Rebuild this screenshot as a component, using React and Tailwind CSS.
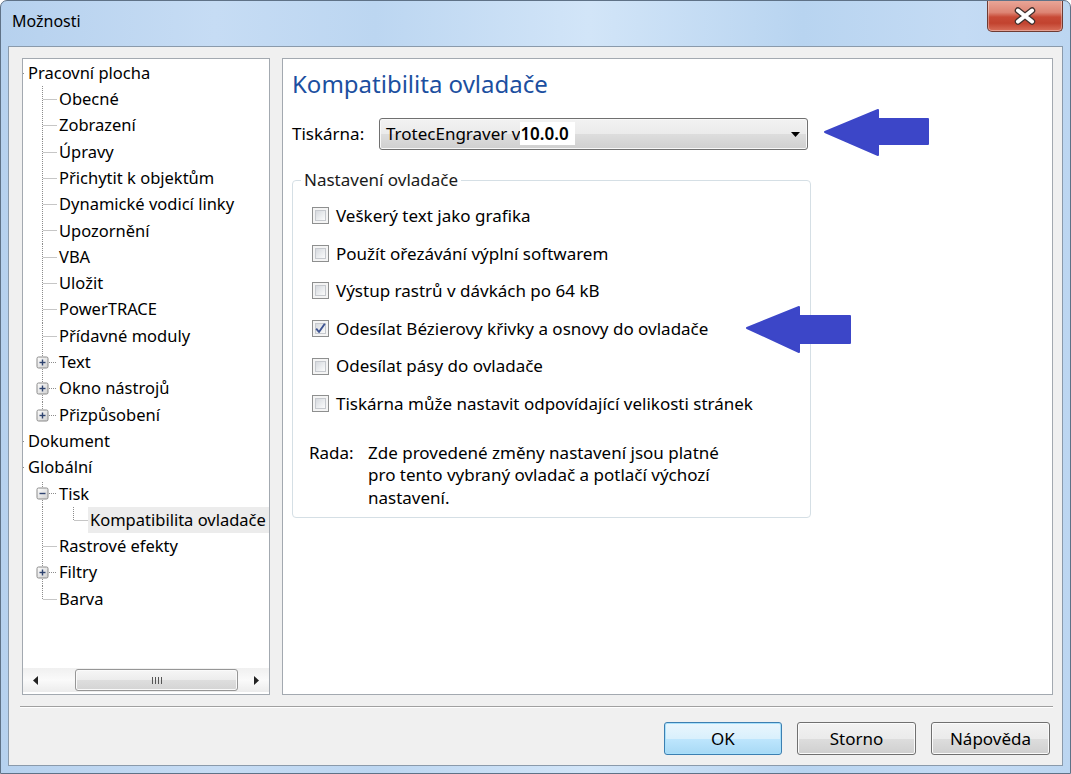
import React from "react";

const LINE = "#8c8c8c";

function Cell({ type }) {
  const c = 16.5;
  const m = 13.5;
  const dash = "1 1";
  const parts = [];
  if (type === "v" || type === "t" || type === "p" || type === "m") {
    if (type === "p" || type === "m") {
      parts.push(<line key="a" x1={c} y1={0} x2={c} y2={8} stroke={LINE} strokeDasharray={dash} />);
      parts.push(<line key="b" x1={c} y1={20} x2={c} y2={27} stroke={LINE} strokeDasharray={dash} />);
    } else {
      parts.push(<line key="a" x1={c} y1={0} x2={c} y2={27} stroke={LINE} strokeDasharray={dash} />);
    }
  }
  if (type === "l" || type === "pl") {
    parts.push(<line key="a" x1={c} y1={0} x2={c} y2={type === "pl" ? 8 : m} stroke={LINE} strokeDasharray={dash} />);
  }
  if (type === "t" || type === "l") {
    parts.push(<line key="h" x1={c + 1} y1={m} x2={31} y2={m} stroke={LINE} strokeDasharray={dash} />);
  }
  if (type === "p" || type === "pl" || type === "m") {
    parts.push(<line key="h" x1={23} y1={m} x2={31} y2={m} stroke={LINE} strokeDasharray={dash} />);
    parts.push(
      <rect key="r" x={11} y={8} width={11} height={11} rx={1.5} fill="url(#pbox)" stroke="#8a8a8a" />
    );
    parts.push(<line key="mh" x1={13.5} y1={m} x2={19.5} y2={m} stroke="#2f4470" strokeWidth={1.4} />);
    if (type !== "m") {
      parts.push(<line key="mv" x1={c} y1={10.5} x2={c} y2={16.5} stroke="#2f4470" strokeWidth={1.4} />);
    }
  }
  return (
    <svg width="31" height="27" className="shrink-0 block">
      <defs>
        <linearGradient id="pbox" x1="0" y1="0" x2="1" y2="1">
          <stop offset="0" stopColor="#ffffff" />
          <stop offset="1" stopColor="#cfcfcf" />
        </linearGradient>
      </defs>
      {parts}
    </svg>
  );
}

const TREE = [
  { t: "Pracovní plocha", root: true },
  { t: "Obecné", c: ["t"] },
  { t: "Zobrazení", c: ["t"] },
  { t: "Úpravy", c: ["t"] },
  { t: "Přichytit k objektům", c: ["t"] },
  { t: "Dynamické vodicí linky", c: ["t"] },
  { t: "Upozornění", c: ["t"] },
  { t: "VBA", c: ["t"] },
  { t: "Uložit", c: ["t"] },
  { t: "PowerTRACE", c: ["t"] },
  { t: "Přídavné moduly", c: ["t"] },
  { t: "Text", c: ["p"] },
  { t: "Okno nástrojů", c: ["p"] },
  { t: "Přizpůsobení", c: ["pl"] },
  { t: "Dokument", root: true },
  { t: "Globální", root: true },
  { t: "Tisk", c: ["m"] },
  { t: "Kompatibilita ovladače", c: ["v", "l"], sel: true },
  { t: "Rastrové efekty", c: ["t"] },
  { t: "Filtry", c: ["p"] },
  { t: "Barva", c: ["l"] },
];

function TreeRow({ row }) {
  return (
    <div className="flex h-[26.3px] items-center overflow-hidden">
      <div className="w-[3px] h-full flex items-center shrink-0">
        {row.root && <div className="w-[1px] h-[1px] bg-[#8c8c8c]" />}
      </div>
      {(row.c || []).map((t, i) => (
        <Cell key={i} type={t} />
      ))}
      <div
        className={
          "h-full flex items-center px-[2px] whitespace-nowrap text-black " +
          (row.sel ? "flex-1 bg-[#ececec]" : "")
        }
      >
        {row.t}
      </div>
    </div>
  );
}

function Checkbox({ checked }) {
  return (
    <div className="w-[17px] h-[17px] border border-[#8e8f8f] bg-[#f4f4f4] p-[2px] shrink-0 relative">
      <div className="w-full h-full border border-[#c6c9ce] bg-[linear-gradient(135deg,#d6d9de_0%,#eceef0_60%,#fbfbfb_100%)]" />
      {checked && (
        <svg width="15" height="15" viewBox="0 0 15 15" className="absolute left-[0px] top-[0px]">
          <path d="M3.2 7.6 L6 11 L11.8 2.8" fill="none" stroke="#3d5391" strokeWidth="1.9" strokeLinejoin="round" />
        </svg>
      )}
    </div>
  );
}

function CheckRow({ label, checked }) {
  return (
    <div className="flex items-center h-[37.6px] gap-[7px]">
      <Checkbox checked={checked} />
      <span className="whitespace-nowrap">{label}</span>
    </div>
  );
}

function Button({ children, primary }) {
  return (
    <div
      className={
        "h-[33px] rounded-[3px] border flex items-center justify-center text-[17px] " +
        (primary
          ? "w-[118px] border-[#3c7fb1] bg-[linear-gradient(180deg,#eaf6fd_0%,#d9f0fc_50%,#bee6fd_51%,#a7d9f5_100%)] shadow-[inset_0_0_0_1px_#a8e0fb]"
          : "w-[119px] border-[#707070] bg-[linear-gradient(180deg,#f2f2f2_0%,#ebebeb_50%,#dddddd_51%,#cfcfcf_100%)] shadow-[inset_0_0_0_1px_#fbfbfb]")
      }
    >
      {children}
    </div>
  );
}

function Arrow({ className, d }) {
  return (
    <svg width="108" height="50" className={"absolute " + className}>
      <path d={d} fill="#3c46c8" stroke="#3c46c8" strokeWidth="2" strokeLinejoin="round" />
    </svg>
  );
}

export default function App() {
  return (
    <div className="w-[1071px] h-[774px] overflow-hidden font-['Noto_Sans',sans-serif] text-[16px] text-black rounded-t-[7px] border border-[#5f7287] bg-[linear-gradient(90deg,#b6d1ee_0%,#c6dcf4_20%,#bcd6f1_35%,#d2e5f8_55%,#b8d4f0_75%,#c4dbf4_90%,#bcd6f1_100%)] flex flex-col">
      {/* title bar */}
      <div className="h-[45px] flex items-start justify-between pl-[11px] pr-[7px] shrink-0">
        <div className="mt-[8px] leading-[24px] text-[16px] text-black">Možnosti</div>
        <div className="-mt-[1px] w-[76px] h-[32px] rounded-b-[5px] border border-t-0 border-[#6e3b33] bg-[linear-gradient(180deg,#eaa89a_0%,#dd8574_40%,#c84a36_55%,#c2432f_75%,#d9705b_100%)] flex items-center justify-center shadow-[inset_0_0_0_1px_rgba(255,255,255,0.35)]">
          <svg width="24" height="18" viewBox="0 0 24 18">
            <path d="M5 3.5 L19 14.5 M19 3.5 L5 14.5" stroke="#40302d" strokeWidth="6.5" strokeLinecap="round" />
            <path d="M5 3.5 L19 14.5 M19 3.5 L5 14.5" stroke="#ffffff" strokeWidth="4" strokeLinecap="round" />
          </svg>
        </div>
      </div>
      {/* client area */}
      <div className="flex-1 mx-[7px] mb-[7px] border border-[#8a9aab] bg-[#f0f0f0] flex flex-col">
        <div className="flex gap-[12px] pl-[13px] pr-[9px] pt-[11px]">
          {/* tree panel */}
          <div className="w-[248px] h-[637px] border border-[#a3a9b0] bg-white flex flex-col shrink-0 text-[16.5px]">
            <div className="flex-1 pt-[1px]">
              {TREE.map((r, i) => (
                <TreeRow key={i} row={r} />
              ))}
            </div>
            <div className="h-[24px] mb-[2px] flex items-stretch bg-[linear-gradient(180deg,#f0f0f0_0%,#fafafa_50%,#ececec_100%)]">
              <div className="w-[25px] flex items-center justify-center">
                <svg width="6" height="9"><path d="M5 0 L0 4.5 L5 9 Z" fill="#222" /></svg>
              </div>
              <div className="flex-1 flex items-center">
                <div className="ml-[27px] w-[163px] h-[22px] rounded-[3px] border border-[#969696] bg-[linear-gradient(180deg,#f6f6f6_0%,#ececec_50%,#dedede_51%,#d4d4d4_100%)] shadow-[inset_0_0_0_1px_#fafafa] flex items-center justify-center gap-[2px]">
                  <div className="w-[1px] h-[7px] bg-[#555]" />
                  <div className="w-[1px] h-[7px] bg-[#555]" />
                  <div className="w-[1px] h-[7px] bg-[#555]" />
                  <div className="w-[1px] h-[7px] bg-[#555]" />
                </div>
              </div>
              <div className="w-[24px] flex items-center justify-center">
                <svg width="6" height="9"><path d="M0 0 L5 4.5 L0 9 Z" fill="#222" /></svg>
              </div>
            </div>
          </div>
          {/* right panel */}
          <div className="flex-1 h-[637px] border border-[#a3a9b0] bg-white relative pl-[9px] pt-[10px] text-[17px]">
            <div className="text-[24px] leading-[30px] text-[#1c4fa0]">Kompatibilita ovladače</div>
            <div className="mt-[19px] flex items-center h-[32px]">
              <div className="w-[87px]">Tiskárna:</div>
              <div className="w-[429px] h-[32px] rounded-[3px] border border-[#707070] bg-[linear-gradient(180deg,#f2f2f2_0%,#ebebeb_50%,#dddddd_51%,#cfcfcf_100%)] shadow-[inset_0_0_0_1px_#f8f8f8] flex items-center pl-[6px] pr-[7px]">
                <span className="whitespace-nowrap">
                  TrotecEngraver v<span className="bg-white font-semibold pr-[6px]">10.0.0</span>
                </span>
                <div className="flex-1" />
                <svg width="9" height="5"><path d="M0 0 L9 0 L4.5 5 Z" fill="#000" /></svg>
              </div>
            </div>
            <fieldset className="mt-[19px] w-[519px] border border-[#d5dfe5] rounded-[4px] pb-[8px]">
              <legend className="ml-[8px] px-[3px] leading-[22px] text-[#1a1a1a]">Nastavení ovladače</legend>
              <div className="pt-[6px] pl-[19px] flex flex-col">
                <CheckRow label="Veškerý text jako grafika" />
                <CheckRow label="Použít ořezávání výplní softwarem" />
                <CheckRow label="Výstup rastrů v dávkách po 64 kB" />
                <CheckRow label="Odesílat Bézierovy křivky a osnovy do ovladače" checked />
                <CheckRow label="Odesílat pásy do ovladače" />
                <CheckRow label="Tiskárna může nastavit odpovídající velikosti stránek" />
              </div>
              <div className="mt-[19px] pl-[16px] flex leading-[22.5px]">
                <div className="w-[59px] shrink-0">Rada:</div>
                <div>
                  Zde provedené změny nastavení jsou platné
                  <br />
                  pro tento vybraný ovladač a potlačí výchozí
                  <br />
                  nastavení.
                </div>
              </div>
            </fieldset>
            <Arrow
              className="left-[540px] top-[49px]"
              d="M2 24 L55 2 L55 11 L105 11 L105 36 L55 36 L55 47 Z"
            />
            <Arrow
              className="left-[462px] top-[246px]"
              d="M2 23 L54 2 L54 11 L105 11 L105 38 L54 38 L54 47 Z"
            />
          </div>
        </div>
        {/* separator */}
        <div className="mt-[11px] ml-[11px] mr-[9px] border-t border-[#a0a0a0] border-b border-b-white" />
        <div className="mt-[14px] flex justify-end gap-[15px] pr-[12px]">
          <Button primary>OK</Button>
          <Button>Storno</Button>
          <Button>Nápověda</Button>
        </div>
      </div>
    </div>
  );
}
